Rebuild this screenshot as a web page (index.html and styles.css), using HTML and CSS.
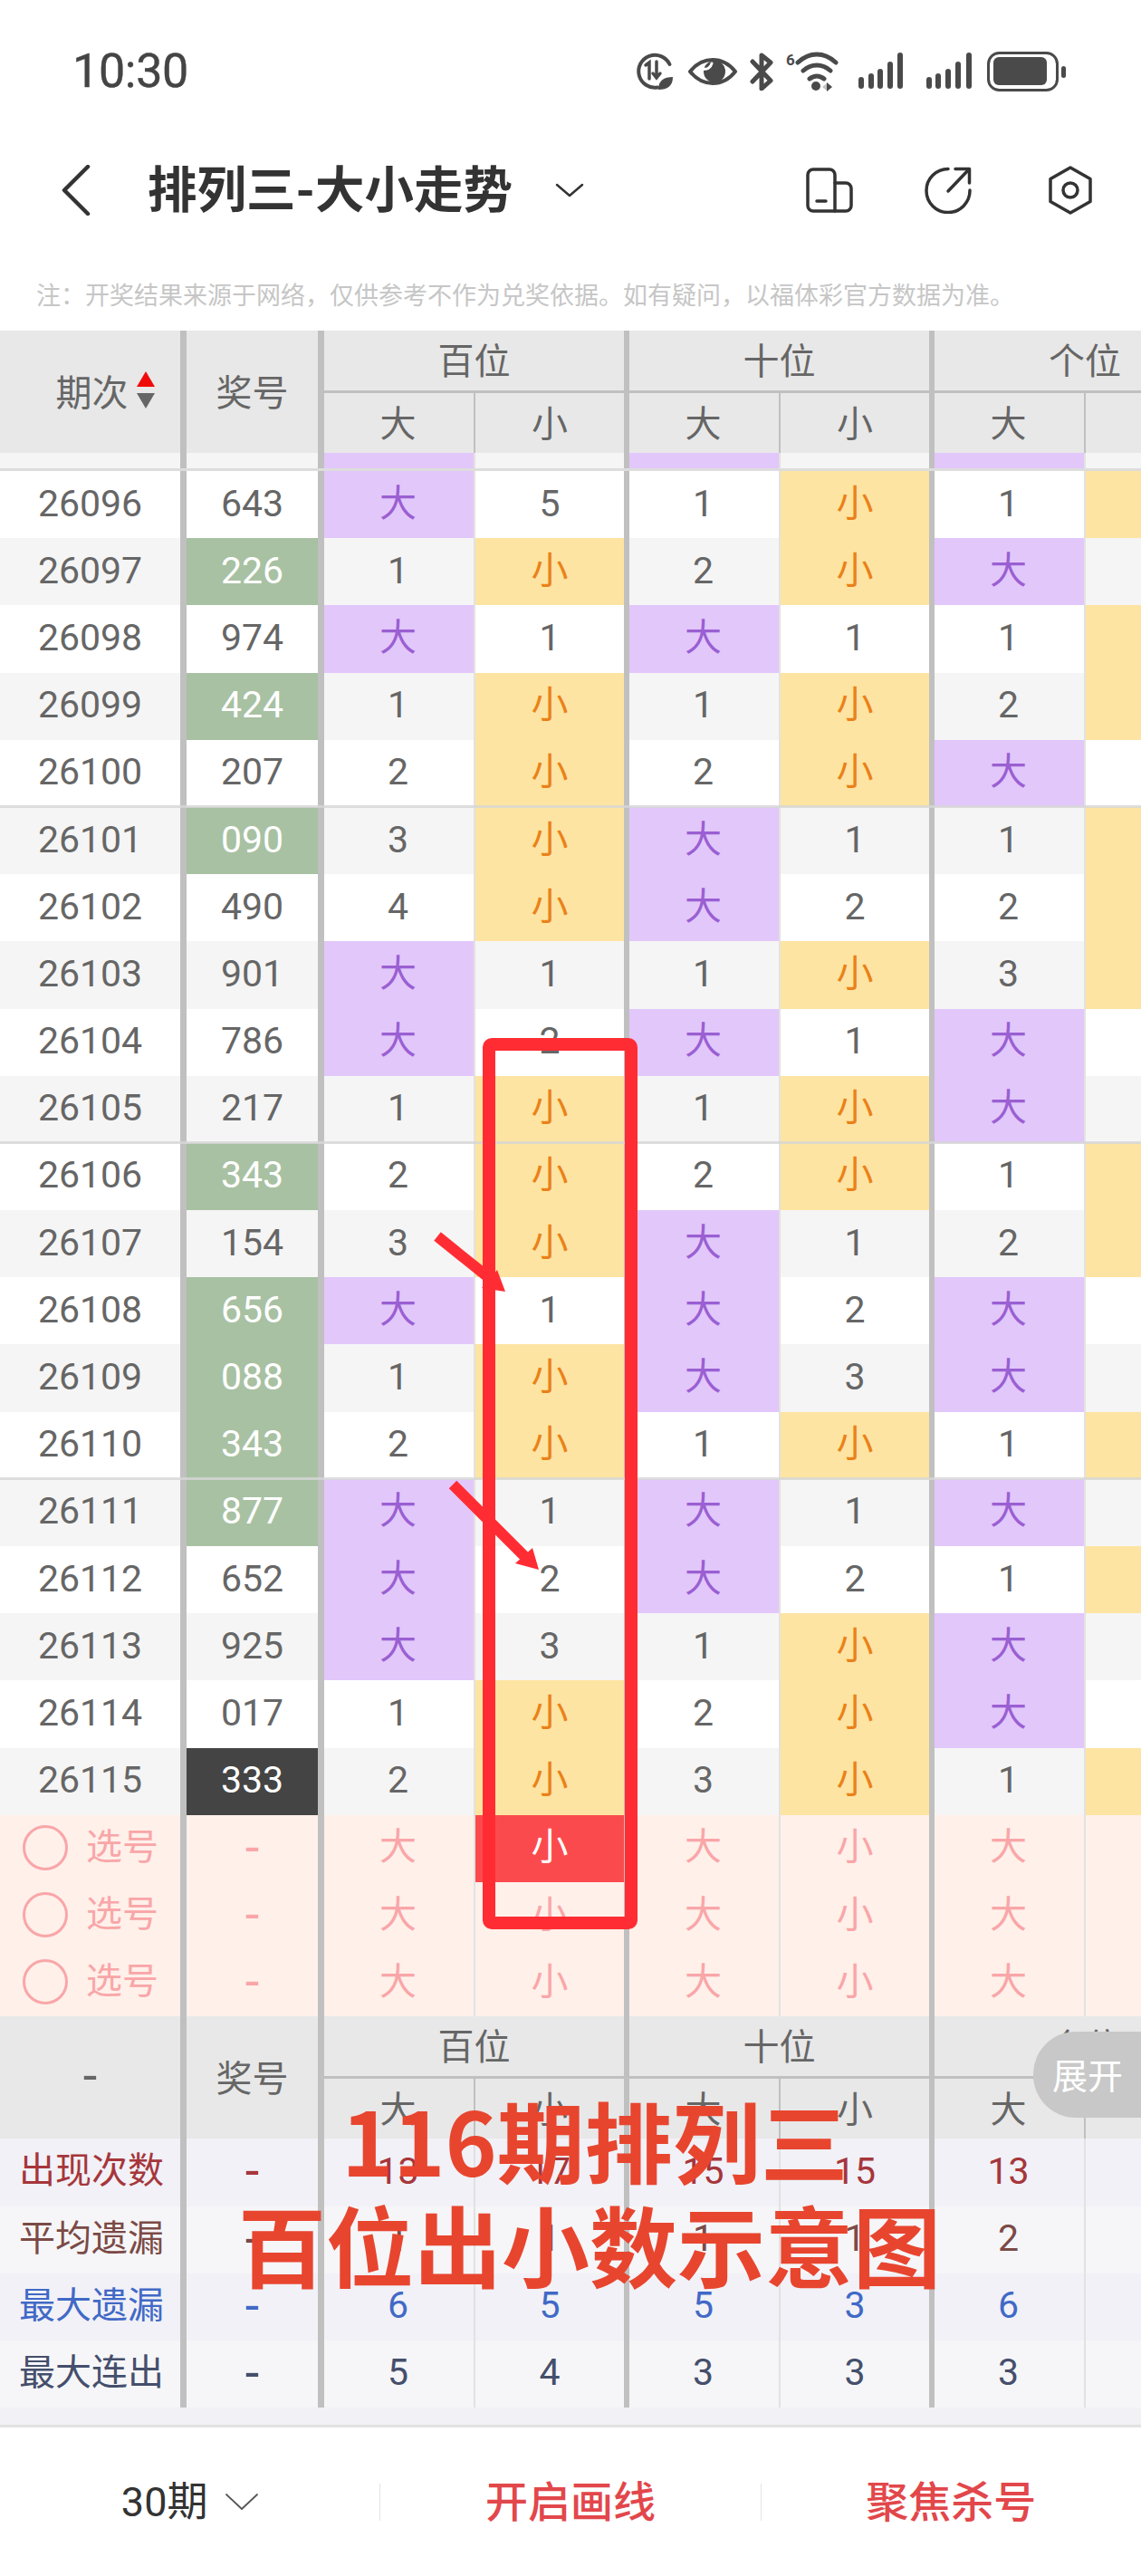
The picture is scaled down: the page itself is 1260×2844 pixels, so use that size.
FILE: index.html
```html
<!DOCTYPE html>
<html lang="zh-CN">
<head>
<meta charset="utf-8">
<title>排列三-大小走势</title>
<link rel="stylesheet" href="styles.css">
</head>
<body>
<div class="page">
  <header class="status">
    <span class="time">10:30</span>
    <div class="status-icons">
      <svg class="si" width="46" height="44" viewBox="0 0 46 44" fill="none" stroke="#4a4a4a" stroke-width="4" stroke-linecap="round"><path d="M26 39.500A18 18 0 1 1 39.500 14"/><path d="M13 15l4-3v18" stroke-width="3.5"/><path d="M25 11v18M21 24l4 5 4-5" stroke-width="3.5"/><path d="M27 42c0-10 6-14 16-14 0 10-6 14-16 14z" fill="#4a4a4a" stroke="none"/></svg>
      <svg class="si eye" width="54" height="30" viewBox="0 0 54 30" fill="none"><path d="M2 15C10 5 18 2 27 2s17 3 25 13c-8 10-16 13-25 13S10 25 2 15z" stroke="#4a4a4a" stroke-width="4" stroke-linejoin="round"/><circle cx="29" cy="15" r="12" fill="#4a4a4a"/><path d="M16 12a8 8 0 0 0 10-6" stroke="#fff" stroke-width="3" stroke-linecap="round"/></svg>
      <svg class="si" width="26" height="42" viewBox="0 0 26 42" fill="none" stroke="#4a4a4a" stroke-width="5" stroke-linecap="round" stroke-linejoin="round"><path d="M3 10l20 21-10 9V3l10 8L3 32"/></svg>
      <svg class="si" width="58" height="44" viewBox="0 0 58 44" fill="none" stroke="#4a4a4a" stroke-width="5" stroke-linecap="round"><path d="M13 12C26 0 42 0 55 12M19 21c9-8 21-8 30 0M26 30c5-4 11-4 16 0"/><circle cx="33" cy="38" r="5" fill="#4a4a4a" stroke="none"/><path d="M45 34l6 5-6 5z" fill="#4a4a4a" stroke="none"/><path d="M40 39l5-4v8z" fill="#c4c4c4" stroke="none"/><text x="0" y="15" class="six">6</text></svg>
      <svg class="si bars-a" width="53" height="42" viewBox="0 0 53 42" fill="#4a4a4a"><rect x="0" y="27" width="6" height="13" rx="3"/><rect x="11" y="23" width="6" height="17" rx="3"/><rect x="21" y="18" width="6" height="22" rx="3"/><rect x="32" y="10" width="6" height="30" rx="3"/><rect x="43" y="0" width="6" height="40" rx="3"/></svg>
      <svg class="si" width="53" height="42" viewBox="0 0 53 42" fill="#4a4a4a"><rect x="0" y="27" width="6" height="13" rx="3"/><rect x="10" y="23" width="6" height="17" rx="3"/><rect x="21" y="18" width="6" height="22" rx="3"/><rect x="32" y="10" width="6" height="30" rx="3"/><rect x="44" y="0" width="6" height="40" rx="3"/></svg>
      <svg class="si" width="88" height="44" viewBox="0 0 88 44" fill="none"><rect x="1.5" y="1.5" width="76" height="41" rx="12" stroke="#4a4a4a" stroke-width="3"/><rect x="7" y="6" width="59" height="31" rx="6" fill="#4a4a4a"/><rect x="82" y="16" width="5" height="13" rx="2.5" fill="#4a4a4a"/></svg>
    </div>
  </header>

  <nav class="nav">
    <svg class="back" width="32" height="56" viewBox="0 0 32 56" fill="none" stroke="#333" stroke-width="4.5" stroke-linecap="round" stroke-linejoin="round"><path d="M29 2L3 28l26 26"/></svg>
    <h1 class="title">排列三-大小走势</h1>
    <svg class="caret" width="32" height="16" viewBox="0 0 32 16" fill="none" stroke="#333" stroke-width="2.5" stroke-linecap="round" stroke-linejoin="round"><path d="M2 2l14 12L30 2"/></svg>
    <div class="nav-icons">
      <svg width="52" height="50" viewBox="0 0 52 50" fill="none" stroke="#333" stroke-width="3.5" stroke-linecap="round" stroke-linejoin="round"><path d="M8 2h18a6 6 0 0 1 6 6v40H8a6 6 0 0 1-6-6V8a6 6 0 0 1 6-6z"/><path d="M32 17h12a6 6 0 0 1 6 6v19a6 6 0 0 1-6 6H32"/><path d="M12 37h10"/></svg>
      <svg width="52" height="52" viewBox="0 0 52 52" fill="none" stroke="#333" stroke-width="3.5" stroke-linecap="round" stroke-linejoin="round"><path d="M26 2.500A24 24 0 1 0 50 26"/><path d="M26 27L49 3"/><path d="M34 2.500h15.500V18"/></svg>
      <svg class="hex" width="50" height="54" viewBox="0 0 50 54" fill="none" stroke="#333" stroke-width="3.5" stroke-linecap="round" stroke-linejoin="round"><path d="M25 2l22 12.500v25L25 52 3 39.500v-25z"/><circle cx="25" cy="27" r="8"/></svg>
    </div>
  </nav>

  <p class="note">注&#xFF1A;开奖结果来源于网络&#xFF0C;仅供参考不作为兑奖依据。如有疑问&#xFF0C;以福体彩官方数据为准。</p>

  <section class="table">
    <div class="head">
      <div class="hc p tall sorted">期次<span class="sort"><i class="up"></i><i class="down"></i></span></div>
      <div class="hc n tall">奖号</div>
      <div class="hc grp gb">百位</div>
      <div class="hc grp gb">十位</div>
      <div class="hc grp gl">个位</div>
      <div class="hc sd">大</div><div class="hc sm">小</div>
      <div class="hc sd">大</div><div class="hc sm">小</div>
      <div class="hc sd">大</div><div class="hc">小</div>
    </div>

    <div class="peek">
      <div class="c p"></div><div class="c n"></div><div class="c dv da"></div><div class="c mv"></div><div class="c dv da"></div><div class="c mv"></div><div class="c dv da"></div><div class="c lv"></div>
    </div>

    <div class="row w"><div class="c p">26096</div><div class="c n">643</div><div class="c dv da">大</div><div class="c mv">5</div><div class="c dv">1</div><div class="c mv xi">小</div><div class="c dv">1</div><div class="c lv xi">小</div></div>
    <div class="row"><div class="c p">26097</div><div class="c n g">226</div><div class="c dv">1</div><div class="c mv xi">小</div><div class="c dv">2</div><div class="c mv xi">小</div><div class="c dv da">大</div><div class="c lv">1</div></div>
    <div class="row w"><div class="c p">26098</div><div class="c n">974</div><div class="c dv da">大</div><div class="c mv">1</div><div class="c dv da">大</div><div class="c mv">1</div><div class="c dv">1</div><div class="c lv xi">小</div></div>
    <div class="row"><div class="c p">26099</div><div class="c n g">424</div><div class="c dv">1</div><div class="c mv xi">小</div><div class="c dv">1</div><div class="c mv xi">小</div><div class="c dv">2</div><div class="c lv xi">小</div></div>
    <div class="row w"><div class="c p">26100</div><div class="c n">207</div><div class="c dv">2</div><div class="c mv xi">小</div><div class="c dv">2</div><div class="c mv xi">小</div><div class="c dv da">大</div><div class="c lv">1</div></div>
    <div class="row rule"><div class="c p">26101</div><div class="c n g">090</div><div class="c dv">3</div><div class="c mv xi">小</div><div class="c dv da">大</div><div class="c mv">1</div><div class="c dv">1</div><div class="c lv xi">小</div></div>
    <div class="row w"><div class="c p">26102</div><div class="c n">490</div><div class="c dv">4</div><div class="c mv xi">小</div><div class="c dv da">大</div><div class="c mv">2</div><div class="c dv">2</div><div class="c lv xi">小</div></div>
    <div class="row"><div class="c p">26103</div><div class="c n">901</div><div class="c dv da">大</div><div class="c mv">1</div><div class="c dv">1</div><div class="c mv xi">小</div><div class="c dv">3</div><div class="c lv xi">小</div></div>
    <div class="row w"><div class="c p">26104</div><div class="c n">786</div><div class="c dv da">大</div><div class="c mv">2</div><div class="c dv da">大</div><div class="c mv">1</div><div class="c dv da">大</div><div class="c lv">1</div></div>
    <div class="row"><div class="c p">26105</div><div class="c n">217</div><div class="c dv">1</div><div class="c mv xi">小</div><div class="c dv">1</div><div class="c mv xi">小</div><div class="c dv da">大</div><div class="c lv">2</div></div>
    <div class="row w rule"><div class="c p">26106</div><div class="c n g">343</div><div class="c dv">2</div><div class="c mv xi">小</div><div class="c dv">2</div><div class="c mv xi">小</div><div class="c dv">1</div><div class="c lv xi">小</div></div>
    <div class="row"><div class="c p">26107</div><div class="c n">154</div><div class="c dv">3</div><div class="c mv xi">小</div><div class="c dv da">大</div><div class="c mv">1</div><div class="c dv">2</div><div class="c lv xi">小</div></div>
    <div class="row w"><div class="c p">26108</div><div class="c n g">656</div><div class="c dv da">大</div><div class="c mv">1</div><div class="c dv da">大</div><div class="c mv">2</div><div class="c dv da">大</div><div class="c lv">1</div></div>
    <div class="row"><div class="c p">26109</div><div class="c n g">088</div><div class="c dv">1</div><div class="c mv xi">小</div><div class="c dv da">大</div><div class="c mv">3</div><div class="c dv da">大</div><div class="c lv">2</div></div>
    <div class="row w"><div class="c p">26110</div><div class="c n g">343</div><div class="c dv">2</div><div class="c mv xi">小</div><div class="c dv">1</div><div class="c mv xi">小</div><div class="c dv">1</div><div class="c lv xi">小</div></div>
    <div class="row rule"><div class="c p">26111</div><div class="c n g">877</div><div class="c dv da">大</div><div class="c mv">1</div><div class="c dv da">大</div><div class="c mv">1</div><div class="c dv da">大</div><div class="c lv">1</div></div>
    <div class="row w"><div class="c p">26112</div><div class="c n">652</div><div class="c dv da">大</div><div class="c mv">2</div><div class="c dv da">大</div><div class="c mv">2</div><div class="c dv">1</div><div class="c lv xi">小</div></div>
    <div class="row"><div class="c p">26113</div><div class="c n">925</div><div class="c dv da">大</div><div class="c mv">3</div><div class="c dv">1</div><div class="c mv xi">小</div><div class="c dv da">大</div><div class="c lv">1</div></div>
    <div class="row w"><div class="c p">26114</div><div class="c n">017</div><div class="c dv">1</div><div class="c mv xi">小</div><div class="c dv">2</div><div class="c mv xi">小</div><div class="c dv da">大</div><div class="c lv">2</div></div>
    <div class="row"><div class="c p">26115</div><div class="c n k">333</div><div class="c dv">2</div><div class="c mv xi">小</div><div class="c dv">3</div><div class="c mv xi">小</div><div class="c dv">1</div><div class="c lv xi">小</div></div>

    <div class="row pick"><div class="c p pk"><i class="ring"></i>选号</div><div class="c n dash">-</div><div class="c dv">大</div><div class="c mv on"><span>小</span></div><div class="c dv">大</div><div class="c mv">小</div><div class="c dv">大</div><div class="c lv">小</div></div>
    <div class="row pick"><div class="c p pk"><i class="ring"></i>选号</div><div class="c n dash">-</div><div class="c dv">大</div><div class="c mv">小</div><div class="c dv">大</div><div class="c mv">小</div><div class="c dv">大</div><div class="c lv">小</div></div>
    <div class="row pick"><div class="c p pk"><i class="ring"></i>选号</div><div class="c n dash">-</div><div class="c dv">大</div><div class="c mv">小</div><div class="c dv">大</div><div class="c mv">小</div><div class="c dv">大</div><div class="c lv">小</div></div>

    <div class="head">
      <div class="hc p tall dash">-</div>
      <div class="hc n tall">奖号</div>
      <div class="hc grp gb">百位</div>
      <div class="hc grp gb">十位</div>
      <div class="hc grp gl">个位</div>
      <div class="hc sd">大</div><div class="hc sm">小</div>
      <div class="hc sd">大</div><div class="hc sm">小</div>
      <div class="hc sd">大</div><div class="hc">小</div>
    </div>

    <div class="row st st-a s-red"><div class="c p lab">出现次数</div><div class="c n dash">-</div><div class="c dv">13</div><div class="c mv">17</div><div class="c dv">15</div><div class="c mv">15</div><div class="c dv">13</div><div class="c lv">17</div></div>
    <div class="row st st-b s-brown"><div class="c p lab">平均遗漏</div><div class="c n dash">-</div><div class="c dv">1</div><div class="c mv">1</div><div class="c dv">1</div><div class="c mv">1</div><div class="c dv">2</div><div class="c lv">1</div></div>
    <div class="row st st-a s-blue"><div class="c p lab">最大遗漏</div><div class="c n dash">-</div><div class="c dv">6</div><div class="c mv">5</div><div class="c dv">5</div><div class="c mv">3</div><div class="c dv">6</div><div class="c lv">3</div></div>
    <div class="row st st-b s-slate"><div class="c p lab">最大连出</div><div class="c n dash">-</div><div class="c dv">5</div><div class="c mv">4</div><div class="c dv">3</div><div class="c mv">3</div><div class="c dv">3</div><div class="c lv">4</div></div>
    <div class="tail"></div>
  </section>

  <footer class="foot">
    <div class="fi period">30期<svg width="36" height="18" viewBox="0 0 36 18" fill="none" stroke="#555" stroke-width="1.800" stroke-linecap="round" stroke-linejoin="round"><path d="M1 1l17 16L35 1"/></svg></div>
    <div class="fi act">开启画线</div>
    <div class="fi act">聚焦杀号</div>
  </footer>

  <div class="pill">展开</div>

  <svg class="marks" width="1260" height="2844" viewBox="0 0 1260 2844" fill="none">
    <rect x="540" y="1153" width="157" height="970" rx="3" stroke="#ff2d33" stroke-width="14"/>
    <path d="M483 1365l56 45" stroke="#ff2d33" stroke-width="12"/>
    <path d="M558 1426l-9-24-17 20z" fill="#ff2d33"/>
    <path d="M500 1639l80 80" stroke="#ff2d33" stroke-width="12"/>
    <path d="M595 1733l-7-24-19 17z" fill="#ff2d33"/>
  </svg>

  <div class="caption"><div>116期排列三</div><div class="caption-b">百位出小数示意图</div></div>
</div>
</body>
</html>
```
FILE: styles.css
```css
* { box-sizing: border-box; }
html, body { margin: 0; padding: 0; background: #fff; }
.page {
  position: relative;
  width: 1260px;
  height: 2844px;
  overflow: hidden;
  font-family: Roboto, "Noto Sans CJK SC", sans-serif;
  color: #666;
}

/* status bar */
.status {
  height: 158px;
  padding: 0 82px 0 80px;
  display: flex;
  align-items: center;
  justify-content: space-between;
}
.time { font-size: 52px; color: #444; line-height: 1; letter-spacing: -.3px; -webkit-text-stroke: .4px #444; }
.status-icons { display: flex; align-items: center; gap: 14px; }
.si { display: block; flex: none; }
.bars-a { margin: 0 8px; }
.six { font: 700 17px Roboto, sans-serif; fill: #4a4a4a; stroke: none; }

/* nav */
.nav {
  height: 104px;
  padding: 0 53px 0 68px;
  display: flex;
  align-items: center;
}
.back { flex: none; }
.title {
  margin: 0 0 0 63px;
  font-size: 54.5px;
  font-weight: 700;
  color: #333;
  line-height: 1;
  white-space: nowrap;
}
.caret { margin-left: 47px; flex: none; }
.nav-icons { margin-left: auto; display: flex; align-items: center; gap: 79px; }
.hex { margin-left: 5px; }

.note {
  margin: 0;
  height: 103px;
  padding: 43px 0 0 40px;
  font-size: 27px;
  line-height: 40px;
  color: #c6c6c6;
  white-space: nowrap;
  font-family: "Noto Sans CJK SC", sans-serif;
}

/* table */
.table { width: 1364px; }
.head, .peek, .row {
  display: grid;
  grid-template-columns: 206px 152px 167px 170px 167px 170px 167px 165px;
}
.head {
  grid-template-rows: 69px 66px;
  background: #e8e8e8;
}
.hc {
  display: flex;
  align-items: center;
  justify-content: center;
  padding-bottom: 4px;
  font-size: 40px;
  color: #666;
}
.hc.p, .hc.n { border-right: 7px solid #c0c0c0; grid-row: span 2; }
.hc.sorted { padding-left: 33px; }
.grp { grid-column: span 2; border-bottom: 3px solid #c0c0c0; }
.gb { border-right: 6px solid #c0c0c0; }
.sd { border-right: 2px solid #c0c0c0; padding-right: 2px; }
.sm { border-right: 6px solid #c0c0c0; }

.sort { display: inline-flex; flex-direction: column; gap: 7px; margin-left: 9px; }
.sort i { display: block; width: 0; height: 0; border-left: 10px solid transparent; border-right: 10px solid transparent; }
.up { border-bottom: 17px solid #f00b0b; }
.down { border-top: 17px solid #666; }

.peek { height: 20px; background: #f5f5f5; border-bottom: 3px solid #ddd; }
.row { height: 74.2px; background: #f5f5f5; position: relative; }
.row.w { background: #fff; }
.row.rule::before {
  content: "";
  position: absolute;
  left: 0;
  right: 0;
  top: -2px;
  height: 3px;
  background: rgba(214, 214, 214, .8);
  z-index: 1;
}

.c {
  display: flex;
  align-items: center;
  justify-content: center;
  padding-bottom: 2px;
  font-size: 41px;
  color: #666;
  line-height: 1;
}
.p, .n { border-right: 7px solid #c0c0c0; }
.dv { border-right: 2px solid #e2e2e2; padding-right: 2px; }
.mv { border-right: 6px solid #c0c0c0; }
.da { background: #e2c7fb; color: #9a5fd2; }
.xi { background: #fee4a2; color: #ea8119; }
.g { background: #a8c1a3; color: #fff; }
.k { background: #444; color: #fff; }
.c.dash, .hc.dash { font-size: 56px; }

.pick { background: #fff0ea; }
.pick .c { color: #f9a6a8; }
.pick .on { background: #fb4a4d; color: #fff; }
.pk { justify-content: flex-start; padding-left: 25px; }
.c.pk, .c.lab { font-size: 40px; }
.ring { width: 50px; height: 50px; margin-right: 20px; border: 3px solid #f9a6a8; border-radius: 50%; flex: none; }

.st-a { background: #f1f1f7; }
.st-b { background: #f6f6f8; }
.lab { justify-content: flex-start; padding-left: 21px; }
.s-red .c { color: #a6363b; }
.s-brown .c { color: #7b4a46; }
.s-blue .c { color: #4169c6; }
.s-slate .c { color: #454f6c; }
.tail { height: 19px; background: #f2f2f6; }

/* footer */
.foot {
  position: absolute;
  left: 0;
  right: 0;
  bottom: 0;
  height: 167px;
  background: #fff;
  border-top: 3px solid #e2e2e2;
  display: flex;
  align-items: center;
}
.fi {
  flex: 1;
  height: 41px;
  display: flex;
  align-items: center;
  justify-content: center;
  font-size: 47px;
  line-height: 1;
}
.fi + .fi { border-left: 1px solid #e4e4e4; }
.period { color: #333; font-size: 45px; }
.period svg { margin-left: 20px; }
.act { color: #e2474b; font-weight: 500; }

/* overlays */
.pill {
  position: absolute;
  right: 0;
  top: 2243px;
  width: 119px;
  height: 95px;
  padding: 0 0 4px 21px;
  border-radius: 47px 0 0 47px;
  background: #c8c8c8;
  color: #fff;
  font-size: 39px;
  display: flex;
  align-items: center;
  z-index: 3;
}
.marks { position: absolute; left: 0; top: 0; z-index: 4; pointer-events: none; }
.caption {
  position: absolute;
  left: 54px;
  right: 0;
  top: 2303px;
  text-align: center;
  font-family: "Noto Sans CJK SC", sans-serif;
  font-size: 97px;
  line-height: 115px;
  font-weight: 700;
  color: #e8452f;
  z-index: 5;
}
.caption-b { margin-left: -12px; }
```
